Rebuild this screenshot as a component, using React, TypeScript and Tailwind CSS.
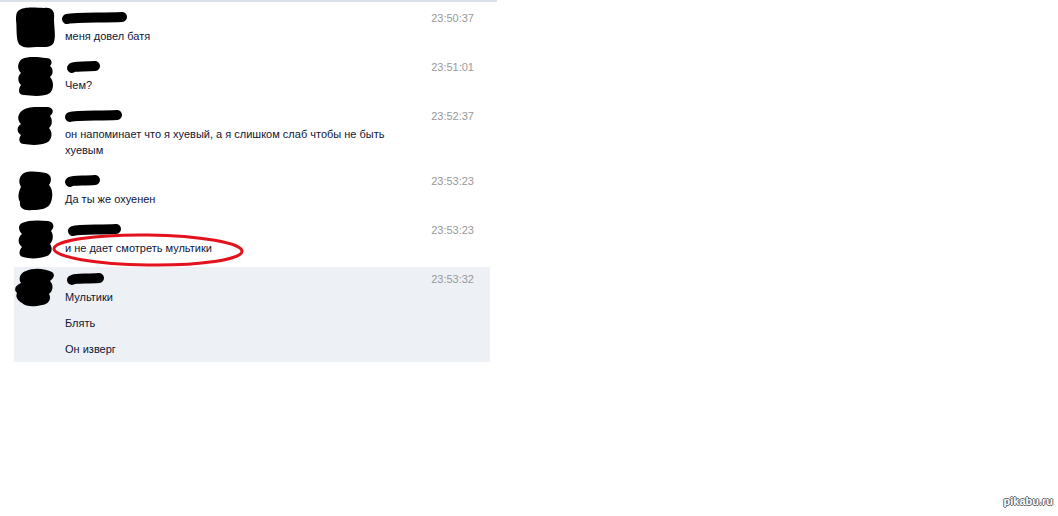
import type { ReactNode } from 'react';

type Msg = {
  time: string;
  avatar: number;
  lines: ReactNode[];
  unread?: boolean;
  circled?: boolean;
};

// scribbled-out avatars, all a bit different
const avatars = [
  'M4 5 C10 0 22 2 30 2 C38 1 41 5 40 13 C40 21 42 30 40 36 C38 42 30 41 22 41 C14 42 6 42 4 36 C2 30 3 22 2 14 C2 10 2 7 4 5 Z',
  'M8 4 C14 1 24 2 32 3 C38 3 39 8 36 11 C40 14 39 20 36 22 C40 26 40 34 36 38 C30 42 18 41 10 40 C4 40 4 34 7 30 C3 26 4 20 7 18 C3 14 3 8 8 4 Z',
  'M9 6 C14 2 26 3 34 3 C40 4 40 9 36 12 C39 16 38 22 35 24 C39 28 38 35 34 38 C26 42 16 41 10 40 C5 40 4 35 7 31 C2 28 3 22 7 20 C3 16 3 10 9 6 Z',
  'M10 4 C16 1 26 3 32 4 C38 6 38 12 35 16 C39 20 39 28 37 33 C35 40 26 41 18 41 C10 42 5 39 6 33 C3 28 5 22 7 18 C4 13 5 7 10 4 Z',
  'M8 5 C14 2 24 2 34 3 C40 4 41 9 37 13 C40 17 39 23 36 26 C39 30 38 36 33 38 C25 41 15 41 9 39 C4 38 5 32 8 29 C3 25 4 19 8 16 C4 12 4 7 8 5 Z',
  'M12 4 C20 0 32 2 38 5 C42 8 39 12 36 14 C40 18 39 24 35 27 C38 32 34 38 28 38 C20 40 12 40 8 36 C4 34 1 30 3 26 C-1 22 2 18 7 16 C4 12 6 6 12 4 Z',
];

function Avatar({ v }: { v: number }) {
  return (
    <svg width="44" height="44" viewBox="0 0 44 44" className="block">
      <path d={avatars[v]} fill="#000" />
    </svg>
  );
}

function NameBlob({ w, dx = 0 }: { w: number; dx?: number }) {
  return (
    <svg width={w + 14} height="16" viewBox={`0 0 ${w + 14} 16`} className="block" style={{ marginLeft: dx }}>
      <path
        d={`M7 8 C${w * 0.3} 6 ${w * 0.7} 7 ${w + 4} 6`}
        stroke="#000"
        strokeWidth="10"
        strokeLinecap="round"
        fill="none"
      />
    </svg>
  );
}

const nameWidths = [58, 26, 50, 28, 46, 30];
const nameOffsets = [-5, 0, -2, -2, 1, 0];

const messages: Msg[] = [
  { time: '23:50:37', avatar: 0, lines: ['меня довел батя'] },
  { time: '23:51:01', avatar: 1, lines: ['Чем?'] },
  {
    time: '23:52:37',
    avatar: 2,
    lines: ['он напоминает что я хуевый, а я слишком слаб чтобы не быть хуевым'],
  },
  { time: '23:53:23', avatar: 3, lines: ['Да ты же охуенен'] },
  { time: '23:53:23', avatar: 4, lines: ['и не дает смотреть мультики'], circled: true },
  { time: '23:53:32', avatar: 5, lines: ['Мультики', 'Блять', 'Он изверг'], unread: true },
];

function Row({ m, i }: { m: Msg; i: number }) {
  return (
    <div className={`relative flex pt-[3px] pr-4 ${m.unread ? 'bg-[#edf1f5] pb-[5px]' : 'pb-[11px]'}`}>
      <div className="w-[51px] h-[35px] shrink-0 -mt-[3px]">
        <Avatar v={m.avatar} />
      </div>
      <div className="flex-1">
        <div className="h-[19px] flex items-center">
          <NameBlob w={nameWidths[i]} dx={nameOffsets[i]} />
        </div>
        {m.lines.map((l, k) => (
          <div key={k} className={`w-[335px] leading-[16px] ${k > 0 ? 'mt-[10px]' : ''}`}>
            {l}
          </div>
        ))}
      </div>
      <div className="w-[60px] h-[19px] text-right text-[#999] leading-[19px]">{m.time}</div>
      {m.circled && (
        <svg className="absolute left-[37px] top-[14px]" width="194" height="36" viewBox="0 0 194 36">
          <ellipse
            cx="97"
            cy="18"
            rx="94"
            ry="15"
            transform="rotate(0.8 97 18)"
            fill="none"
            stroke="#e3121c"
            strokeWidth="3"
          />
        </svg>
      )}
    </div>
  );
}

export default function App() {
  return (
    <div className="relative w-[1058px] h-[516px] bg-white font-['Liberation_Sans',Arial,sans-serif] text-[11px] text-[#101535]">
      <div className="w-[497px] border-t-2 border-[#dae1e8] pt-[4px]">
        <div className="ml-[14px] w-[476px]">
          {messages.map((m, i) => (
            <Row key={i} m={m} i={i} />
          ))}
        </div>
      </div>
      <div className="absolute right-[5px] bottom-[7px] font-['Liberation_Sans',sans-serif] font-bold text-[11px] text-white [text-shadow:1px_0_0_#666,-1px_0_0_#666,0_1px_0_#666,0_-1px_0_#666]">
        pikabu.ru
      </div>
    </div>
  );
}
